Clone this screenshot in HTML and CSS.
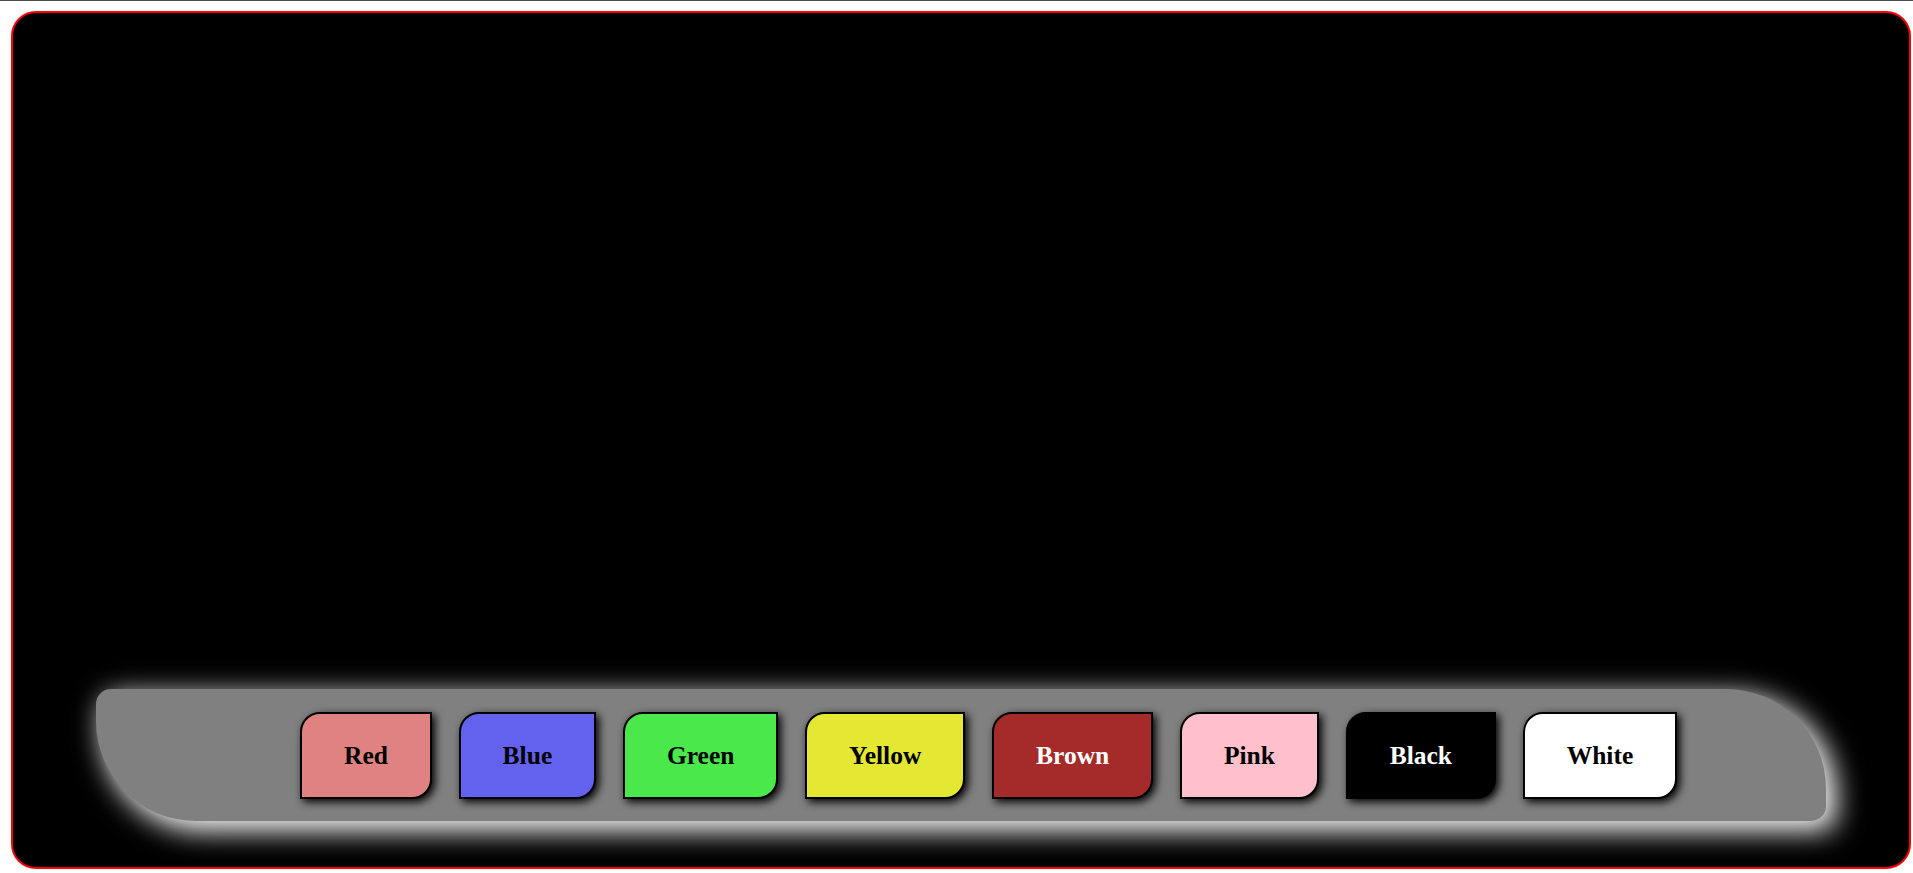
FILE: index.html
```html
<!DOCTYPE html>
<html lang="en">
<head>
<meta charset="utf-8">
<title>Colors</title>
<link rel="stylesheet" href="styles.css">
</head>
<body>
<div class="topline"></div>
<div class="page">
  <main class="screen">
    <div class="dock">
      <button class="swatch red">Red</button>
      <button class="swatch blue">Blue</button>
      <button class="swatch green">Green</button>
      <button class="swatch yellow">Yellow</button>
      <button class="swatch brown">Brown</button>
      <button class="swatch pink">Pink</button>
      <button class="swatch black">Black</button>
      <button class="swatch white">White</button>
    </div>
  </main>
</div>
</body>
</html>
```

FILE: styles.css
```css
html, body {
  margin: 0;
  padding: 0;
  background: #ffffff;
  overflow: hidden;
}

.topline {
  height: 1px;
  background: #4d4d4d;
}

.page {
  padding: 10px 2px 4px 11px;
}

.screen {
  box-sizing: border-box;
  width: 1900px;
  height: 858px;
  background: #000000;
  border: 2px solid #ff0000;
  border-radius: 25px;
  display: flex;
  flex-direction: column;
  justify-content: flex-end;
  padding: 0 83px 46px 83px;
}

.dock {
  box-sizing: border-box;
  height: 132px;
  background: #808080;
  border-radius: 15px 100px;
  box-shadow: 8px 8px 28px 2px #ffffff;
  display: flex;
  align-items: center;
  gap: 26.7px;
  padding-left: 204px;
}

.swatch {
  font-family: "Liberation Serif", "Times New Roman", serif;
  font-weight: bold;
  font-size: 25.5px;
  line-height: 29px;
  padding: 27px 42px;
  border: 2px solid #000000;
  border-radius: 20px 0 20px 0;
  box-shadow: 3px 3px 8px #000000;
  color: #000000;
  cursor: pointer;
  margin: 0;
}

.red { background: #e18282; }
.blue { background: #6262ee; }
.green { background: #4be84b; }
.yellow { background: #e4e832; }
.brown { background: #a52a2a; color: #ffffff; }
.pink { background: #ffc0cb; }
.black { background: #000000; color: #ffffff; }
.white { background: #ffffff; }
```
